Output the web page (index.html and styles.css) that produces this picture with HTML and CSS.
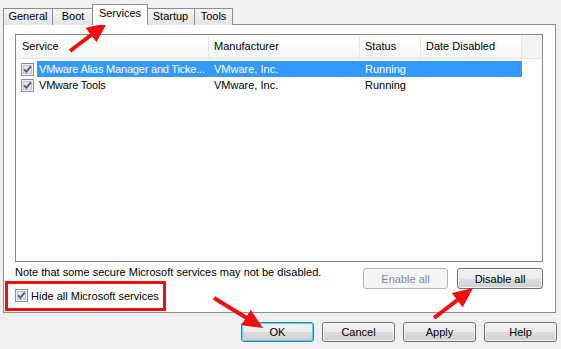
FILE: index.html
```html
<!DOCTYPE html>
<html lang="en">
<head>
  <meta charset="UTF-8">
  <title>System Configuration - Services</title>
  <link rel="stylesheet" href="styles.css">
</head>
<body>
  <div class="dialog">
    <div class="tabs">
      <div class="tab tab-general">General</div>
      <div class="tab tab-boot">Boot</div>
      <div class="tab tab-services active">Services</div>
      <div class="tab tab-startup">Startup</div>
      <div class="tab tab-tools">Tools</div>
    </div>

    <div class="panel">
      <div class="list">
        <div class="list-head">
          <div class="col col-first">Service</div>
          <div class="col">Manufacturer</div>
          <div class="col">Status</div>
          <div class="col">Date Disabled</div>
          <div class="col col-fill"></div>
        </div>

        <div class="row selected">
          <span class="check">
            <svg width="13" height="13" viewBox="0 0 13 13"><rect x="0.5" y="0.5" width="12" height="12" fill="#f4f4f4" stroke="#8f8f8f"/><rect x="2.5" y="2.5" width="8" height="8" fill="#e2e5ea" stroke="#bfc4cb"/><path d="M3.2 6.4 L5.4 8.8 L9.8 3.4" fill="none" stroke="#4b5e8a" stroke-width="1.8"/></svg>
          </span>
          <div class="cells">
            <span class="cell cell-name">VMware Alias Manager and Ticke...</span>
            <span class="cell">VMware, Inc.</span>
            <span class="cell">Running</span>
            <span class="cell"></span>
          </div>
        </div>

        <div class="row">
          <span class="check">
            <svg width="13" height="13" viewBox="0 0 13 13"><rect x="0.5" y="0.5" width="12" height="12" fill="#f4f4f4" stroke="#8f8f8f"/><rect x="2.5" y="2.5" width="8" height="8" fill="#e2e5ea" stroke="#bfc4cb"/><path d="M3.2 6.4 L5.4 8.8 L9.8 3.4" fill="none" stroke="#4b5e8a" stroke-width="1.8"/></svg>
          </span>
          <div class="cells">
            <span class="cell cell-name">VMware Tools</span>
            <span class="cell">VMware, Inc.</span>
            <span class="cell">Running</span>
            <span class="cell"></span>
          </div>
        </div>
      </div>

      <div class="panel-foot">
        <div class="foot-left">
          <p class="note">Note that some secure Microsoft services may not be disabled.</p>
          <label class="hide-ms">
            <span class="check">
              <svg width="13" height="13" viewBox="0 0 13 13"><rect x="0.5" y="0.5" width="12" height="12" fill="#f4f4f4" stroke="#8f8f8f"/><rect x="2.5" y="2.5" width="8" height="8" fill="#e2e5ea" stroke="#bfc4cb"/><path d="M3.2 6.4 L5.4 8.8 L9.8 3.4" fill="none" stroke="#4b5e8a" stroke-width="1.8"/></svg>
            </span>
            Hide all Microsoft services
          </label>
        </div>
        <div class="foot-buttons">
          <button class="btn btn-wide" disabled>Enable all</button>
          <button class="btn btn-wide btn-disable">Disable all</button>
        </div>
      </div>
    </div>

    <div class="actions">
      <button class="btn btn-default">OK</button>
      <button class="btn">Cancel</button>
      <button class="btn">Apply</button>
      <button class="btn">Help</button>
    </div>
  </div>

  <!-- flechas rojas de anotacion -->
  <svg class="marks" width="561" height="349" viewBox="0 0 561 349">
    <defs>
      <marker id="head" viewBox="0 0 20 18" refX="10" refY="9" markerWidth="20" markerHeight="18" markerUnits="userSpaceOnUse" orient="auto">
        <path d="M0 0 L20 9 L0 18 Z" fill="#f20c0c"/>
      </marker>
    </defs>
    <line x1="70" y1="51" x2="99" y2="29" stroke="#f20c0c" stroke-width="4" marker-end="url(#head)"/>
    <line x1="214" y1="298" x2="254.5" y2="322.8" stroke="#f20c0c" stroke-width="4" marker-end="url(#head)"/>
    <line x1="434" y1="318" x2="465.1" y2="294.1" stroke="#f20c0c" stroke-width="4" marker-end="url(#head)"/>
  </svg>
</body>
</html>
```

FILE: styles.css
```css
/* Estilo global */
body {
  margin: 0;
  width: 561px;
  height: 349px;
  overflow: hidden;
  background-color: #f0f0f0;
  font-family: 'Liberation Sans', Arial, sans-serif;
  font-size: 11px;
  color: #000;
}

.dialog {
  padding: 4px 5px 0 3px;
}

/* Pestañas */
.tabs {
  display: flex;
  align-items: flex-end;
  height: 21px;
  margin-bottom: -1px;
}

.tab {
  box-sizing: border-box;
  height: 17px;
  margin-right: -1px;
  border: 1px solid #898c95;
  border-bottom: none;
  background: linear-gradient(#f6f6f6, #e4e4e4);
  text-align: center;
  line-height: 15px;
}

.tab-general { width: 50px; }
.tab-boot { width: 42px; }
.tab-services { width: 56px; }
.tab-startup { width: 49px; }
.tab-tools { width: 39px; }

.tab.active {
  position: relative;
  z-index: 1;
  height: 21px;
  margin-left: -1px;
  margin-right: -2px;
  background: #fff;
  line-height: 16px;
}

/* Panel */
.panel {
  box-sizing: border-box;
  height: 289px;
  padding: 9px 12px 0 11px;
  border: 1px solid #898c95;
  background-color: #fff;
}

.list {
  box-sizing: border-box;
  height: 228px;
  border: 1px solid #828790;
}

.list-head {
  display: grid;
  grid-template-columns: 193px 151px 61px 101px 1fr;
  height: 24px;
  box-sizing: border-box;
  border-bottom: 1px solid #dfe2e6;
  background: linear-gradient(#ffffff, #fbfbfb 50%, #f3f4f6);
}

.col {
  padding-left: 5px;
  line-height: 23px;
  border-right: 1px solid #e3e5e8;
}

.col-first {
  padding-left: 6px;
}

.col-fill {
  border-right: none;
  background: #f3f3f3;
}

.row {
  display: flex;
  align-items: center;
  height: 16px;
  padding-left: 5px;
}

.row.selected {
  margin-top: 2px;
}

.check {
  display: flex;
  width: 13px;
  height: 13px;
  margin-right: 3px;
}

.cells {
  display: grid;
  grid-template-columns: 172px 151px 61px 101px;
  height: 16px;
  line-height: 16px;
}

.cell {
  padding-left: 5px;
  white-space: nowrap;
  overflow: hidden;
}

.cell-name {
  padding-left: 2px;
  letter-spacing: -0.2px;
}

.row.selected .cells {
  background-color: #3399ff;
  color: #fff;
}

/* Pie del panel */
.panel-foot {
  display: flex;
  justify-content: space-between;
}

.note {
  margin: 3px 0 0;
  line-height: 14px;
}

.hide-ms {
  box-sizing: border-box;
  display: flex;
  align-items: center;
  width: 161px;
  height: 30px;
  margin: 2px 0 0 -10px;
  padding: 0 0 1px 7px;
  border: 3px solid #f20c0c;
}

.foot-buttons {
  display: flex;
  gap: 9px;
  margin-top: 6px;
}

/* Botones */
.btn {
  box-sizing: border-box;
  width: 73px;
  height: 20px;
  padding: 0;
  font-family: inherit;
  font-size: 11px;
  font-weight: normal;
  color: #000;
  border: 1px solid #707070;
  border-radius: 3px;
  background: linear-gradient(#f2f2f2 0%, #ebebeb 50%, #dddddd 51%, #cfcfcf 100%);
  box-shadow: inset 0 0 0 1px rgba(255, 255, 255, 0.7);
}

.btn-wide {
  height: 21px;
}

.btn-wide[disabled] {
  width: 85px;
  color: #8a8a8a;
  border-color: #adb2b5;
  background: #f4f4f4;
  box-shadow: none;
}

.btn-disable {
  width: 86px;
}

.btn-default {
  border-color: #3c7fb1;
  box-shadow: inset 0 0 0 1px #48d5fb;
}

.actions {
  display: flex;
  justify-content: flex-end;
  gap: 8px;
  margin: 9px -1px 0 0;
}

/* Anotaciones */
.marks {
  position: absolute;
  top: 0;
  left: 0;
  pointer-events: none;
}
```
